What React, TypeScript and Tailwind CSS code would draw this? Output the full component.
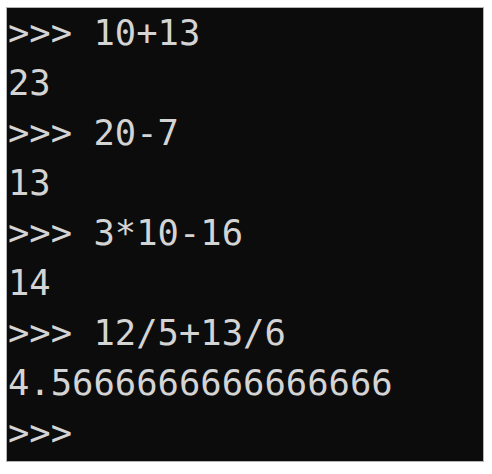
const lines = [
  ">>> 10+13",
  "23",
  ">>> 20-7",
  "13",
  ">>> 3*10-16",
  "14",
  ">>> 12/5+13/6",
  "4.5666666666666666",
  ">>>",
];

export default function App() {
  return (
    <div className="h-[474px] w-[492px] bg-white pl-[6px] pt-[7px]">
      <div className="h-[455px] w-[478px] border border-[#b4b4b4] bg-[#0c0c0c] pl-[1px]">
        <pre className="font-['DejaVu_Sans_Mono',monospace] text-[35.5px] leading-[50px] text-[#d4d4d4]">
          {lines.map((line, i) => (
            <div key={i}>{line}</div>
          ))}
        </pre>
      </div>
    </div>
  );
}
